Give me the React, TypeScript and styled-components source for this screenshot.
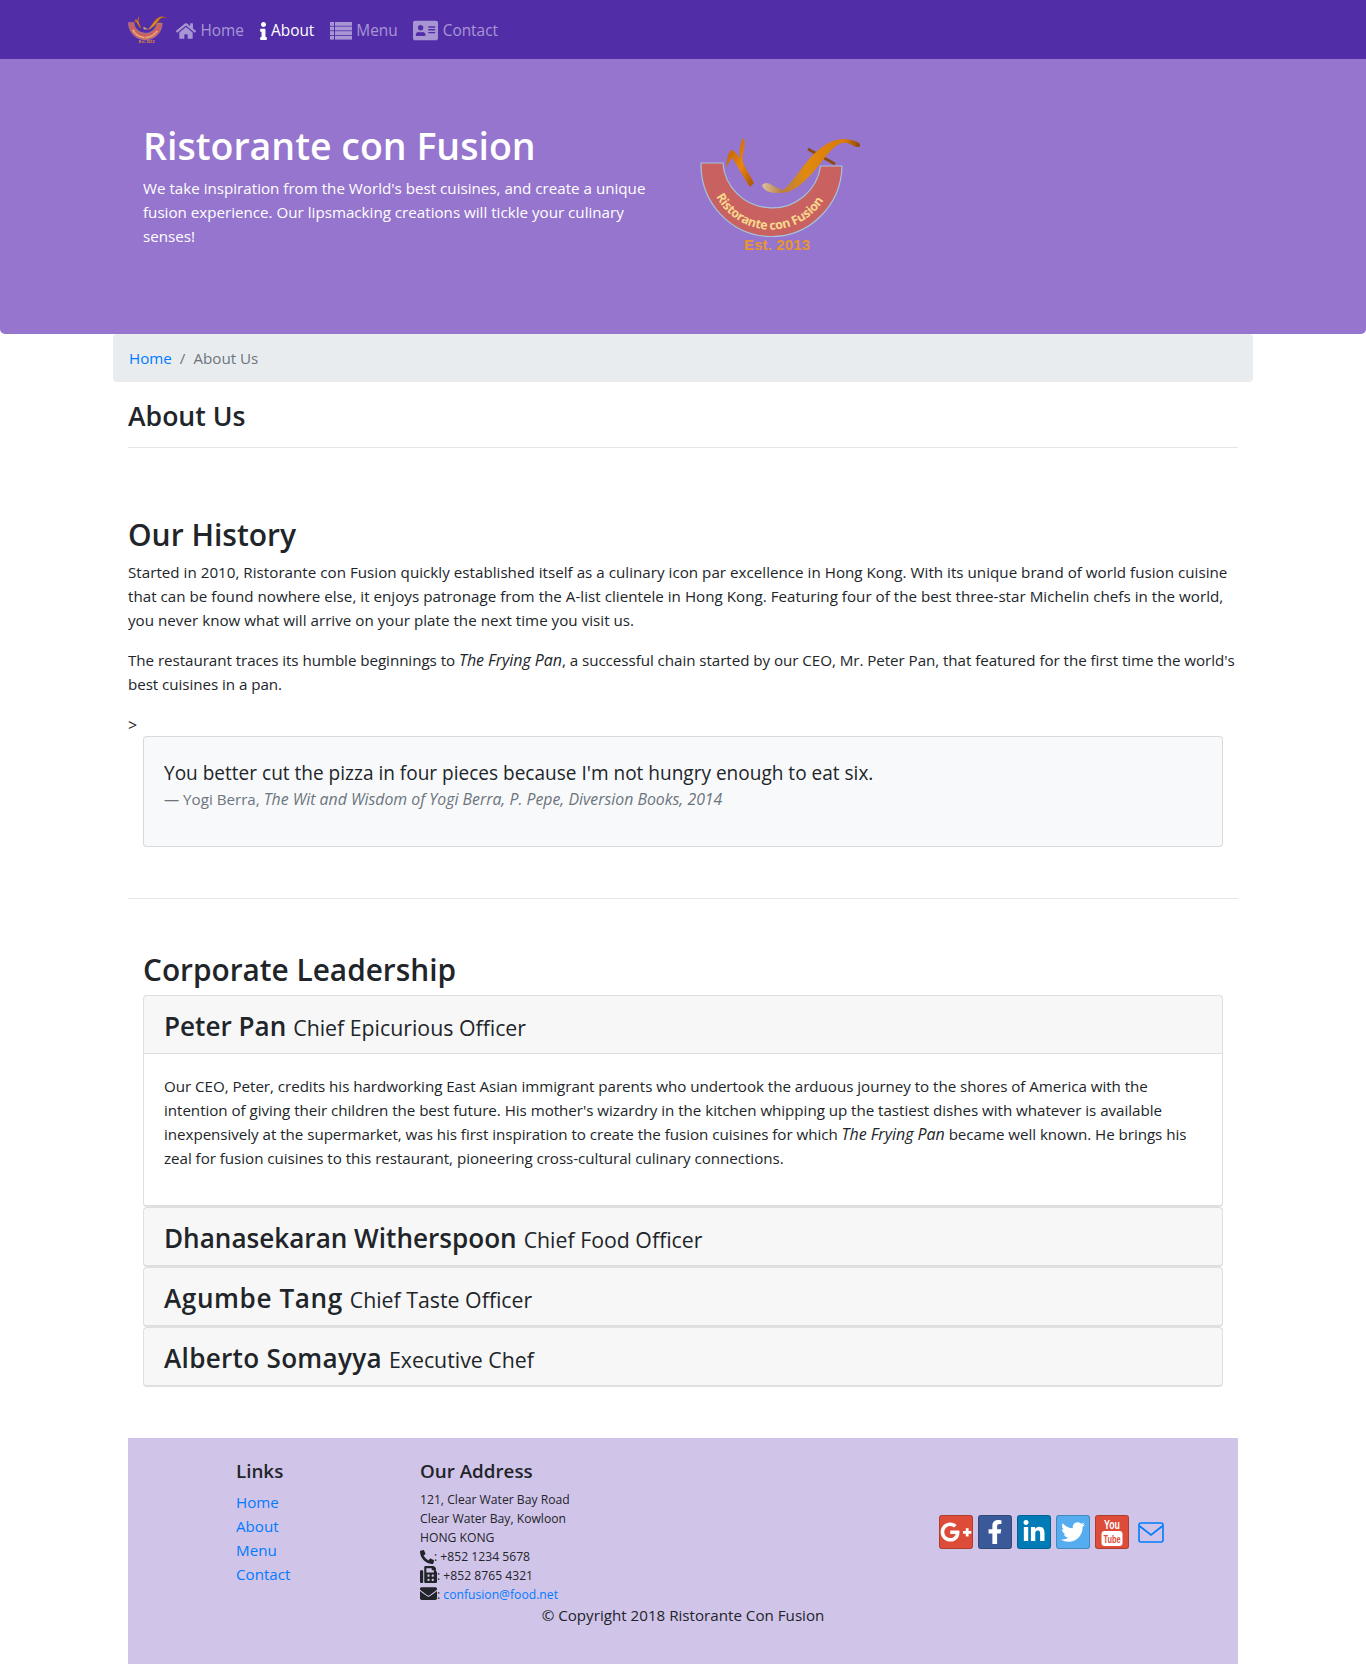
import React from "react";
import styled, { createGlobalStyle } from "styled-components";
import { FaHome, FaInfo, FaAddressCard, FaGooglePlusG, FaFacebookF, FaLinkedinIn, FaTwitter, FaPhoneAlt, FaFax, FaEnvelope } from "react-icons/fa";

const Global = createGlobalStyle`
  * { box-sizing: border-box; }
  body { margin: 0; background: #fff; color: #212529; font-family: "Open Sans", "Noto Sans", sans-serif; font-size: 15.17px; line-height: 24px; }
  a { color: #007bff; text-decoration: none; }
  em { font-size: 1.055em; }
`;
const Page = styled.div`width: 1366px; height: 1664px; overflow: hidden;`;
const Nav = styled.nav`height: 59px; background: #512da8; padding: 0 128px; display: flex; align-items: center;`;
const NavLink = styled.a<{ $active?: boolean }>`
  display: flex; align-items: center; gap: 4.5px; margin-right: 15.5px; margin-top: 2px; font-size: 15.4px; line-height: 24px;
  color: ${p => (p.$active ? "#fff" : "rgba(255,255,255,.5)")};
  svg { display: block; }
`;
const InfoGlyph = styled(FaInfo)`width: 7px; height: 18px;`;
const BrandSlot = styled.div`width: 48px; height: 34px; margin: -2px 7px 0 -7px;`;
const Hero = styled.header`background: #9575cd; height: 275px; padding: 63px 143px 0; border-radius: 0 0 5px 5px; display: flex;`;
const HeroText = styled.div`width: 527px; padding-right: 17px; color: #fff;`;
const HeroTitle = styled.h1`margin: 0 0 6px; font-size: 37.5px; line-height: 48px; font-weight: 600;`;
const HeroLine = styled.p`margin: 0;`;
const Main = styled.main`width: 1140px; margin: 0 auto;`;
const Crumbs = styled.div`height: 48px; background: #e9ecef; border-radius: 4px; padding: 12px 16px; display: flex; gap: 8px; color: #6c757d;`;
const Inner = styled.div`padding: 0 15px;`;
const PageTitle = styled.h3`margin: 17px 0 14px; font-size: 26.6px; line-height: 34px; font-weight: 600;`;
const Rule = styled.hr`margin: 0; border: 0; border-top: 1px solid rgba(0,0,0,.1);`;
const H2 = styled.h2`margin: 68px 0 6px; font-size: 30px; line-height: 38px; font-weight: 600;`;
const Para = styled.p<{ $track?: number }>`margin: 0 0 16px; letter-spacing: ${p => p.$track ?? 0}px;`;
const Gt = styled.div`height: 24px; padding-top: 1px; font-size: 16px;`;
const Indent = styled.div`padding: 0 15px;`;
const Quote = styled.blockquote`margin: 0 0 51px; height: 111px; border: 1px solid rgba(0,0,0,.125); border-radius: 4px; background: #f8f9fa; padding: 21px 20px 0;`;
const QuoteText = styled.p`margin: 0; font-size: 19.05px; line-height: 30px;`;
const QuoteFoot = styled.footer`margin-top: -1px; font-size: 15.17px; line-height: 24px; color: #6c757d;`;
const QuoteCite = styled.cite`font-size: 15.85px;`;
const H2Lead = styled(H2)`margin: 52px 0 6px; font-size: 29.8px;`;
const Card = styled.section`border: 1px solid rgba(0,0,0,.125); border-bottom-width: 2px; border-radius: 4px;`;
const CardHead = styled.div`height: 57px; background: rgba(0,0,0,.03); padding: 13px 20px 0; display: flex; align-items: baseline; gap: 7px;`;
const Name = styled.span<{ $track?: number }>`font-size: 26.1px; line-height: 34px; font-weight: 600; letter-spacing: ${p => p.$track ?? 0}px;`;
const Role = styled.span`font-size: 21.3px; line-height: 34px;`;
const CardBody = styled.div`border-top: 1px solid rgba(0,0,0,.125); padding: 20px; height: 152px; letter-spacing: -0.04px;`;
const Foot = styled.footer`margin-top: 51px; height: 226px; background: #d1c4e9; padding: 21px 0 0;`;
const FootRow = styled.div`display: flex; padding-left: 108px;`;
const LinksCol = styled.div`width: 184px;`;
const AddressCol = styled.div`width: 519px;`;
const FootTitle = styled.h5`margin: 0 0 7px; font-size: 18.8px; line-height: 24px; font-weight: 600;`;
const FootLink = styled.a`display: block;`;
const Address = styled.address`margin-top: 3px; font-style: normal; font-size: 12.17px; line-height: 19px; color: #212529;`;
const AddrLine = styled.div`height: 19px; svg { vertical-align: -3px; }`;
const Social = styled.div`display: flex; align-items: center; gap: 5px; height: 34px; margin-top: 56px;`;
const SocBtn = styled.a<{ $bg: string }>`width: 34px; height: 34px; flex: none; border-radius: 3px; background: ${p => p.$bg}; border: 1px solid rgba(0,0,0,.2); color: #fff; display: flex; align-items: center; justify-content: center;`;
const Mail = styled.a`margin-left: 4px; display: flex; color: #007bff;`;
const Copy = styled.p`margin: -1px 0 0; text-align: center;`;

function ListIcon() {
  return (
    <svg width="22" height="18" viewBox="0 0 22 18" fill="currentColor">
      {[0, 1, 2, 3].map(i => (
        <g key={i}>
          <rect x="0" y={i * 4.6} width="4" height="3.8" />
          <rect x="5" y={i * 4.6} width="17" height="3.8" />
        </g>
      ))}
    </svg>
  );
}

function YouTubeIcon() {
  return (
    <svg width="32" height="30" viewBox="0 0 32 30">
      <text x="16" y="12" textAnchor="middle" fontFamily="Liberation Sans, sans-serif" fontWeight="700" fontSize="13" textLength="16" lengthAdjust="spacingAndGlyphs" fill="#fff">You</text>
      <rect x="5.5" y="14" width="21" height="15" rx="3" fill="#fff" />
      <text x="16" y="25.5" textAnchor="middle" fontFamily="Liberation Sans, sans-serif" fontWeight="700" fontSize="11" textLength="17" lengthAdjust="spacingAndGlyphs" fill="#dd4b39">Tube</text>
    </svg>
  );
}

function MailIcon() {
  return (
    <svg width="26" height="21" viewBox="0 0 26 21" fill="none" stroke="currentColor" strokeWidth="1.6">
      <rect x="1" y="1" width="24" height="19" rx="2" />
      <path d="M1.5 4 L13 13 L24.5 4" />
    </svg>
  );
}

function Logo({ width, height, id }: { width: number; height: number; id: string }) {
  return (
    <svg width={width} height={height} viewBox="0 2 200 137">
      <defs>
        <linearGradient id={id + "o"} x1="0" y1="0" x2="1" y2="1">
          <stop offset="0" stopColor="#b45a08" />
          <stop offset="0.55" stopColor="#e8860e" />
          <stop offset="1" stopColor="#a85206" />
        </linearGradient>
        <linearGradient id={id + "s"} x1="0" y1="0" x2="1" y2="0">
          <stop offset="0" stopColor="#dcc0a0" />
          <stop offset="0.2" stopColor="#b88040" />
          <stop offset="0.45" stopColor="#e08a10" />
          <stop offset="0.85" stopColor="#d87a08" />
          <stop offset="1" stopColor="#8a4606" />
        </linearGradient>
      </defs>
      <path d="M31 43 A70.5 72 0 0 0 172 46 L150.5 46 A49 48 0 0 1 53 43 Z" fill="#c86160" stroke="#a5c3dc" strokeWidth="1.2" />
      <path id={id + "a"} d="M44 72 A62 62 0 0 0 158 72" fill="none" />
      <text fontFamily="Open Sans, sans-serif" fontSize="12.5" fontWeight="700" fill="#f8d88c">
        <textPath href={"#" + id + "a"} textLength="130" startOffset="5">Ristorante con Fusion</textPath>
      </text>
      <text x="74" y="130" fontFamily="Liberation Sans, sans-serif" fontSize="15" fontWeight="700" textLength="66" fill="#e8952e">Est. 2013</text>
      <path d="M57 48 C56 40 58 33 61 30 C65 31 68 35 70 39 C69 32 70 24 73 18 C75 19 75 25 74 30 C72 36 72 41 74 45 C77 51 81 57 84 63 L80 67 C75 60 70 50 66 44 C64 41 63 38 62 38 C60 40 58 44 57 48 Z" fill={`url(#${id}o)`} />
      <path d="M138 29 L165 44" stroke="#8a4a10" strokeWidth="2.6" />
      <path d="M92 65 C94 63 97 62 100 64 C105 67 109 69 113 70 C120 66 128 52 140 38 C150 27 163 18 175 19 C183 20 191 22 190 26 C188 29 183 25 177 23 C172 22 168 24 165 27 C158 32 152 42 145 50 C138 58 130 66 124 69 C118 73 112 73 106 73 C99 73 93 70 92 65 Z" fill={`url(#${id}s)`} />
    </svg>
  );
}

export default function App() {
  return (
    <Page>
      <Global />
      <Nav>
        <BrandSlot><Logo width={48} height={34} id="n" /></BrandSlot>
        <NavLink><FaHome size={20} /> Home</NavLink>
        <NavLink $active><InfoGlyph /> About</NavLink>
        <NavLink><ListIcon /> Menu</NavLink>
        <NavLink><FaAddressCard size={25} /> Contact</NavLink>
      </Nav>
      <Hero>
        <HeroText>
          <HeroTitle>Ristorante con Fusion</HeroTitle>
          <HeroLine>We take inspiration from the World's best cuisines, and create a unique fusion experience. Our lipsmacking creations will tickle your culinary senses!</HeroLine>
        </HeroText>
        <Logo width={200} height={137} id="h" />
      </Hero>
      <Main>
        <Crumbs><a>Home</a><span>/</span><span>About Us</span></Crumbs>
        <Inner>
          <PageTitle>About Us</PageTitle>
          <Rule />
          <H2>Our History</H2>
          <Para $track={0.02}>Started in 2010, Ristorante con Fusion quickly established itself as a culinary icon par excellence in Hong Kong. With its unique brand of world fusion cuisine that can be found nowhere else, it enjoys patronage from the A-list clientele in Hong Kong. Featuring four of the best three-star Michelin chefs in the world, you never know what will arrive on your plate the next time you visit us.</Para>
          <Para $track={-0.05}>The restaurant traces its humble beginnings to <em>The Frying Pan</em>, a successful chain started by our CEO, Mr. Peter Pan, that featured for the first time the world's best cuisines in a pan.</Para>
          <Gt>&gt;</Gt>
          <Indent>
            <Quote>
              <QuoteText>You better cut the pizza in four pieces because I'm not hungry enough to eat six.</QuoteText>
              <QuoteFoot>— Yogi Berra, <QuoteCite>The Wit and Wisdom of Yogi Berra, P. Pepe, Diversion Books, 2014</QuoteCite></QuoteFoot>
            </Quote>
          </Indent>
          <Rule />
          <Indent>
            <H2Lead>Corporate Leadership</H2Lead>
            <Card>
              <CardHead><Name>Peter Pan</Name><Role>Chief Epicurious Officer</Role></CardHead>
              <CardBody>Our CEO, Peter, credits his hardworking East Asian immigrant parents who undertook the arduous journey to the shores of America with the intention of giving their children the best future. His mother's wizardry in the kitchen whipping up the tastiest dishes with whatever is available inexpensively at the supermarket, was his first inspiration to create the fusion cuisines for which <em>The Frying Pan</em> became well known. He brings his zeal for fusion cuisines to this restaurant, pioneering cross-cultural culinary connections.</CardBody>
            </Card>
            <Card><CardHead><Name>Dhanasekaran Witherspoon</Name><Role>Chief Food Officer</Role></CardHead></Card>
            <Card><CardHead><Name $track={0.6}>Agumbe Tang</Name><Role>Chief Taste Officer</Role></CardHead></Card>
            <Card><CardHead><Name $track={0.3}>Alberto Somayya</Name><Role>Executive Chef</Role></CardHead></Card>
          </Indent>
          <Foot>
            <FootRow>
              <LinksCol>
                <FootTitle>Links</FootTitle>
                <FootLink>Home</FootLink>
                <FootLink>About</FootLink>
                <FootLink>Menu</FootLink>
                <FootLink>Contact</FootLink>
              </LinksCol>
              <AddressCol>
                <FootTitle>Our Address</FootTitle>
                <Address>
                  <div>121, Clear Water Bay Road</div>
                  <div>Clear Water Bay, Kowloon</div>
                  <div>HONG KONG</div>
                  <AddrLine><FaPhoneAlt size={14} />: +852 1234 5678</AddrLine>
                  <AddrLine><FaFax size={17} />: +852 8765 4321</AddrLine>
                  <AddrLine><FaEnvelope size={17} />: <a>confusion@food.net</a></AddrLine>
                </Address>
              </AddressCol>
              <Social>
                <SocBtn $bg="#dd4b39"><FaGooglePlusG size={32} /></SocBtn>
                <SocBtn $bg="#3b5998"><FaFacebookF size={24} /></SocBtn>
                <SocBtn $bg="#007bb6"><FaLinkedinIn size={24} /></SocBtn>
                <SocBtn $bg="#55acee"><FaTwitter size={24} /></SocBtn>
                <SocBtn $bg="#dd4b39"><YouTubeIcon /></SocBtn>
                <Mail><MailIcon /></Mail>
              </Social>
            </FootRow>
            <Copy>© Copyright 2018 Ristorante Con Fusion</Copy>
          </Foot>
        </Inner>
      </Main>
    </Page>
  );
}
